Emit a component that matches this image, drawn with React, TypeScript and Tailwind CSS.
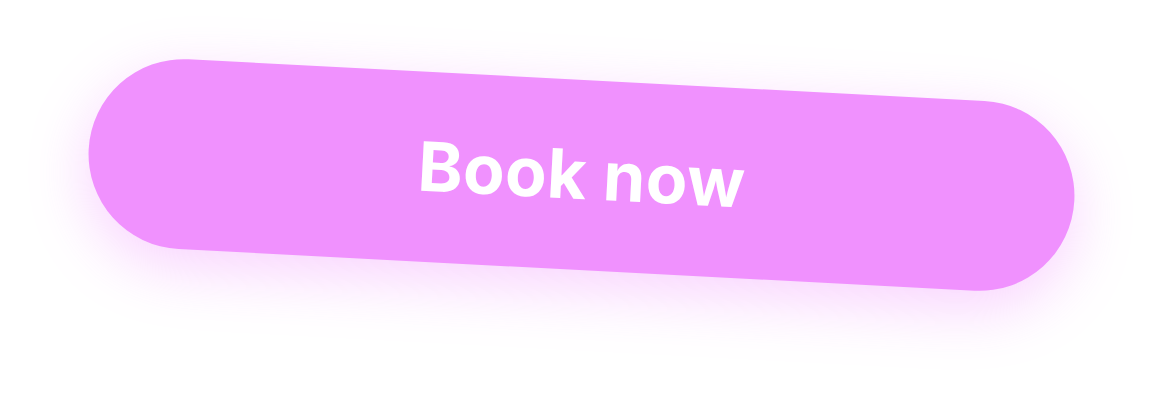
export default function App() {
  return (
    <div className="flex h-[412px] w-full justify-center bg-white pt-[80px]">
      <button
        type="button"
        className="flex h-[190px] w-[987px] rotate-[3deg] items-center justify-center rounded-full bg-[#f091fe] pb-[2px] text-[68px] font-bold tracking-[0.005em] text-white shadow-[0_18px_60px_rgba(236,120,252,0.33)]"
        style={{ fontFamily: "Inter, 'Noto Sans', sans-serif" }}
      >
        Book now
      </button>
    </div>
  );
}
